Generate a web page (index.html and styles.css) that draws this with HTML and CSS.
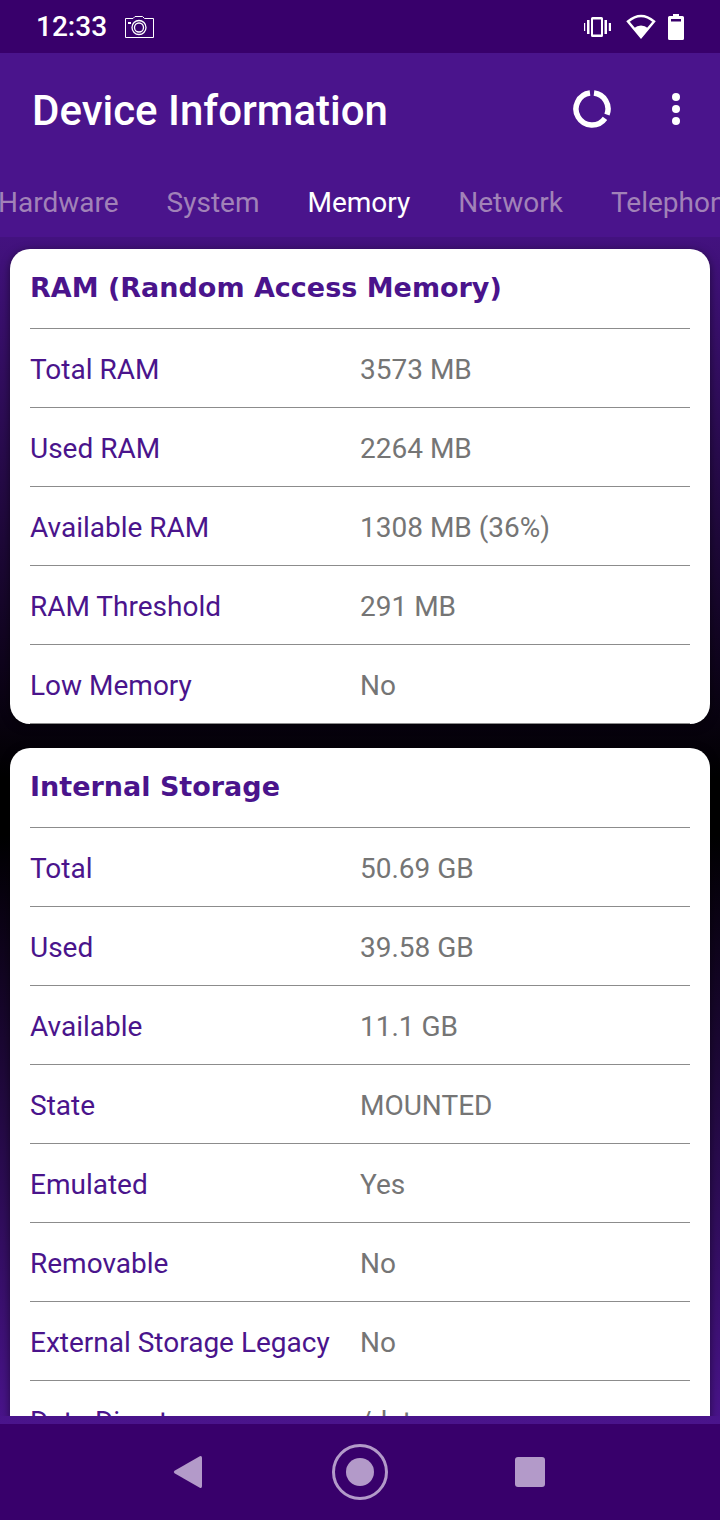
FILE: index.html
```html
<!DOCTYPE html>
<html lang="en">
<head>
  <meta charset="UTF-8">
  <meta name="viewport" content="width=device-width, initial-scale=1.0">
  <title>Device Information</title>
  <link rel="stylesheet" href="styles.css">
</head>
<body>
  <div class="status-bar">
    <span class="clock">12:33</span>
    <svg class="camera" width="30" height="24" viewBox="0 0 30 24" fill="none" stroke="#fff">
      <path d="M.5 3.500H8L10 1.500H17.500L19.500 3.500H28.500V22.500H.5Z"/>
      <circle cx="14" cy="12.500" r="7" stroke-width="1.300"/>
      <circle cx="14" cy="12.500" r="4.500" stroke-width="1.300"/>
      <path d="M3 8h3" stroke-width="2"/>
    </svg>
    <div class="status-icons">
      <svg width="30" height="24" viewBox="1 0 30 24" fill="#fff">
        <path fill-rule="evenodd" d="M9.500 2h9a1.500 1.500 0 0 1 1.500 1.500v17a1.500 1.500 0 0 1-1.500 1.500h-9a1.500 1.500 0 0 1-1.500-1.500v-17a1.500 1.500 0 0 1 1.500-1.500ZM10 4.500v15h8v-15Z"/>
        <path d="M0 8h2.200v8H0zM4 5h2.500v14H4zM21.500 5H24v14h-2.500zM25.800 8H28v8h-2.200z"/>
      </svg>
      <svg width="30" height="26" viewBox="0 0 30 26">
        <path d="M2 7.500Q15-3.500 28 7.500L15 23Z" fill="none" stroke="#fff" stroke-width="2.500"/>
        <path d="M7.500 14.500Q15 8.500 22.500 14.500L15 24Z" fill="#fff"/>
      </svg>
      <svg width="16" height="26" viewBox="0 0 16 26" fill="#fff">
        <path fill-rule="evenodd" d="M5 0h6v2h3.500a1.500 1.500 0 0 1 1.500 1.500v21a1.500 1.500 0 0 1-1.500 1.500h-13a1.500 1.500 0 0 1-1.500-1.500v-21a1.500 1.500 0 0 1 1.500-1.500H5ZM3 5v2.500h10V5Z"/>
      </svg>
    </div>
  </div>

  <header class="toolbar">
    <h1>Device Information</h1>
    <button type="button" aria-label="Usage">
      <svg width="40" height="40" viewBox="0 0 40 40" fill="none" stroke="#fff" stroke-width="5.500">
        <path d="M22 4.100A16 16 0 0 1 35 25.600"/>
        <path d="M33 29.300A16 16 0 1 1 18 4.100"/>
      </svg>
    </button>
    <button type="button" aria-label="More options">
      <svg width="40" height="40" viewBox="0 0 40 40" fill="#fff">
        <circle cx="20" cy="8" r="4"/>
        <circle cx="20" cy="20" r="4"/>
        <circle cx="20" cy="32" r="4"/>
      </svg>
    </button>
  </header>

  <nav class="tabs">
    <a href="#hardware">Hardware</a>
    <a href="#system">System</a>
    <a href="#memory" class="active">Memory</a>
    <a href="#network">Network</a>
    <a href="#telephony">Telephony</a>
  </nav>

  <main>
    <div class="scroll">
      <section class="card">
        <h2>RAM (Random Access Memory)</h2>
        <table>
          <tr><th scope="row">Total RAM</th><td>3573 MB</td></tr>
          <tr><th scope="row">Used RAM</th><td>2264 MB</td></tr>
          <tr><th scope="row">Available RAM</th><td>1308 MB (36%)</td></tr>
          <tr><th scope="row">RAM Threshold</th><td>291 MB</td></tr>
          <tr><th scope="row">Low Memory</th><td>No</td></tr>
        </table>
      </section>

      <section class="card">
        <h2>Internal Storage</h2>
        <table>
          <tr><th scope="row">Total</th><td>50.69 GB</td></tr>
          <tr><th scope="row">Used</th><td>39.58 GB</td></tr>
          <tr><th scope="row">Available</th><td>11.1 GB</td></tr>
          <tr><th scope="row">State</th><td>MOUNTED</td></tr>
          <tr><th scope="row">Emulated</th><td>Yes</td></tr>
          <tr><th scope="row">Removable</th><td>No</td></tr>
          <tr><th scope="row">External Storage Legacy</th><td>No</td></tr>
          <tr><th scope="row">Data Directory</th><td>/data</td></tr>
        </table>
      </section>
    </div>
  </main>

  <div class="nav-bar">
    <button type="button" aria-label="Back">
      <svg width="56" height="56" viewBox="0 0 56 56" fill="#b39ac9">
        <path d="M12.500 26.700 37.800 12.300Q40 11.500 40 14V42Q40 44.500 37.800 43.700L12.500 29.300Q11 28 12.500 26.700Z"/>
      </svg>
    </button>
    <button type="button" aria-label="Home">
      <svg width="56" height="56" viewBox="0 0 56 56" fill="#b39ac9">
        <circle cx="28" cy="28" r="26.500" fill="none" stroke="#b39ac9" stroke-width="3"/>
        <circle cx="28" cy="28" r="14"/>
      </svg>
    </button>
    <button type="button" aria-label="Recent apps">
      <svg width="56" height="56" viewBox="0 0 56 56" fill="#b39ac9">
        <rect x="13" y="13" width="30" height="30" rx="3"/>
      </svg>
    </button>
  </div>
</body>
</html>
```

FILE: styles.css
```css
* {
  box-sizing: border-box;
}
body {
  margin: 0;
  height: 100vh;
  display: flex;
  flex-direction: column;
  overflow: hidden;
  font-family: Roboto, sans-serif;
  font-size: 28px;
  line-height: 32px;
  color: #757575;
  background: #4a148c;
}
svg {
  display: block;
}
button {
  padding: 0;
  border: none;
  background: none;
  cursor: pointer;
}
.status-bar {
  display: flex;
  align-items: center;
  gap: 18px;
  padding: 11px 36px 10px;
  color: #fff;
  background: #38006b;
}
.clock {
  font-weight: 500;
}
.status-icons {
  display: flex;
  align-items: center;
  gap: 12px;
  margin-left: auto;
}
.toolbar {
  display: flex;
  align-items: center;
  gap: 44px;
  padding: 32px 24px 32px 32px;
  color: #fff;
}
.toolbar h1 {
  margin: 0;
  padding-top: 4px;
  flex: 1;
  font-size: 42px;
  line-height: 44px;
  font-weight: 500;
}
.tabs {
  display: flex;
  gap: 48px;
  margin-left: -2px;
  padding: 22px 0 18px;
  white-space: nowrap;
}
.tabs a {
  color: #a182b8;
  text-decoration: none;
}
.tabs .active {
  color: #fff;
}
main {
  flex: 1;
  min-height: 0;
  padding-bottom: 8px;
  background: linear-gradient(#43127f, #000 46%, #000 50%, #4a148c);
}
.scroll {
  height: 100%;
  overflow: hidden;
  padding: 12px 10px 0;
}
.card {
  margin-bottom: 24px;
  padding: 0 20px;
  background: #fff;
  border-radius: 20px;
  box-shadow: 0 2px 8px rgba(0, 0, 0, 0.5);
}
.card h2 {
  margin: 0;
  padding: 23px 0 24px;
  border-bottom: 1px solid #8c8c8c;
  font-family: "DejaVu Sans", sans-serif;
  font-size: 27px;
  line-height: 32px;
  font-weight: 700;
  color: #4a148c;
}
table {
  width: 100%;
  table-layout: fixed;
  border-collapse: separate;
  border-spacing: 0;
}
th, td {
  padding: 25px 0 21px;
  border-bottom: 1px solid #8c8c8c;
  text-align: left;
  font-weight: 400;
  white-space: nowrap;
}
th {
  color: #4a148c;
}
.nav-bar {
  display: flex;
  justify-content: center;
  gap: 114px;
  padding: 20px 0;
  background: #38006b;
}
```
